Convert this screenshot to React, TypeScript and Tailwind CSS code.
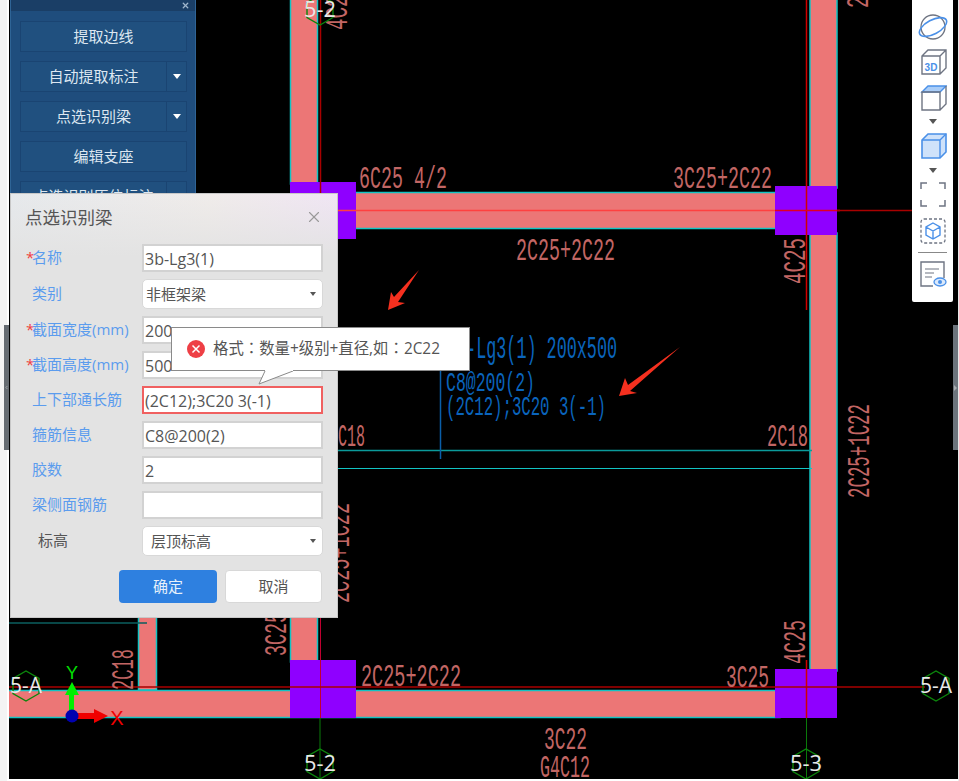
import { ChevronLeft, X } from 'lucide-react'

const CJK = "font-['Open_Sans','Noto_Sans_CJK_SC',sans-serif]"

function Cad({ x, y, w, h = 31, rot, fill = '#c26664', children }: { x: number; y: number; w: number; h?: number; rot?: boolean; fill?: string; children: string }) {
  return (
    <text
      x={x}
      y={y}
      fontSize={h}
      fill={fill}
      fontFamily="'Liberation Mono', monospace"
      textLength={w}
      lengthAdjust="spacingAndGlyphs"
      transform={rot ? `rotate(-90 ${x} ${y})` : undefined}
    >
      {children}
    </text>
  )
}

function AxisTag({ cx, cy, label }: { cx: number; cy: number; label: string }) {
  const r = 15
  const pts = [0, 60, 120, 180, 240, 300]
    .map((a) => {
      const t = ((a + 30) * Math.PI) / 180
      return `${cx + r * Math.cos(t)},${cy + r * Math.sin(t)}`
    })
    .join(' ')
  return (
    <g>
      <polygon points={pts} fill="none" stroke="#0c860c" strokeWidth="1.4" />
      <text x={cx - 16} y={cy + 7} fontSize="21" textLength={32} lengthAdjust="spacingAndGlyphs" fill="#e8e8e8" fontFamily="'Open Sans', sans-serif">
        {label}
      </text>
    </g>
  )
}

function CadCanvas() {
  const beam = '#ec7676'
  const cyan = '#12c4c4'
  const purple = '#8f00ff'
  const red = '#a80000'
  return (
    <svg width="950" height="781" viewBox="9 0 950 781" className="block">
      {/* beams */}
      <rect x="290.5" y="-2" width="27" height="186" fill={beam} stroke={cyan} strokeWidth="1.5" />
      <rect x="290.5" y="610" width="27" height="52" fill={beam} stroke={cyan} strokeWidth="1.5" />
      <rect x="810" y="-2" width="27" height="190" fill={beam} stroke={cyan} strokeWidth="1.5" />
      <rect x="810" y="233" width="27" height="438" fill={beam} stroke={cyan} strokeWidth="1.5" />
      <rect x="138.5" y="610" width="18" height="80" fill={beam} stroke={cyan} strokeWidth="1.5" />
      <rect x="340" y="192.5" width="440" height="36" fill={beam} stroke={cyan} strokeWidth="1.5" />
      <rect x="0" y="690.5" width="780" height="27" fill={beam} stroke={cyan} strokeWidth="1.5" />

      {/* thin lines */}
      <line x1="337" x2="812" y1="450.5" y2="450.5" stroke="#0b9a9a" strokeWidth="1.5" />
      <line x1="337" x2="812" y1="468.5" y2="468.5" stroke="#12c4c4" strokeWidth="1" />
      <line x1="9" x2="147" y1="623" y2="623" stroke="#0b5f5f" strokeWidth="1.5" />
      <line x1="440.5" x2="440.5" y1="360" y2="459" stroke="#0a5ea8" strokeWidth="1.5" />
      <line x1="320" x2="320" y1="660" y2="781" stroke="#0a7a0a" strokeWidth="1" />
      <line x1="806.5" x2="806.5" y1="718" y2="781" stroke="#0a7a0a" strokeWidth="1" />

      {/* columns */}
      <rect x="290" y="182" width="66" height="57" fill={purple} />
      <rect x="775" y="186" width="62" height="49" fill={purple} />
      <rect x="290" y="660" width="66" height="58" fill={purple} />
      <rect x="775" y="669" width="62" height="49" fill={purple} />

      {/* axis lines */}
      <line x1="320.5" x2="320.5" y1="0" y2="195" stroke={red} strokeWidth="1.5" />
      <line x1="806.5" x2="806.5" y1="0" y2="310" stroke="#d00000" strokeWidth="1.5" />
      <line x1="806.5" x2="806.5" y1="660" y2="718" stroke="#d00000" strokeWidth="1.5" />
      <line x1="320.5" x2="320.5" y1="617" y2="718" stroke="#c00030" strokeWidth="1" />
      <line x1="330" x2="775" y1="210.5" y2="210.5" stroke="#ff4040" strokeWidth="1.5" />
      <line x1="775" x2="840" y1="210.5" y2="210.5" stroke="#e00020" strokeWidth="1.5" />
      <line x1="837" x2="912" y1="210.5" y2="210.5" stroke={red} strokeWidth="1.5" />
      <line x1="9" x2="925" y1="687" y2="687" stroke={red} strokeWidth="1.5" />

      {/* rebar text */}
      <Cad x={359} y={188} w={88}>6C25 4/2</Cad>
      <Cad x={673} y={188} w={99}>3C25+2C22</Cad>
      <Cad x={516} y={260} w={99}>2C25+2C22</Cad>
      <Cad x={805} y={284} w={46} rot>4C25</Cad>
      <Cad x={767} y={446} w={41}>2C18</Cad>
      <Cad x={338} y={446} w={27}>C18</Cad>
      <Cad x={869} y={498} w={94} rot>2C25+1C22</Cad>
      <Cad x={361} y={686} w={100}>2C25+2C22</Cad>
      <Cad x={726} y={687} w={43}>3C25</Cad>
      <Cad x={805} y={664} w={44} rot>4C25</Cad>
      <Cad x={544} y={749} w={43}>3C22</Cad>
      <Cad x={540} y={777} w={50}>G4C12</Cad>
      <Cad x={286} y={656} w={44} rot>3C25</Cad>
      <Cad x={133} y={690} w={41} rot>2C18</Cad>
      <Cad x={349} y={603} w={100} rot>2C25+1C22</Cad>
      <Cad x={347} y={30} w={46} rot>4C25</Cad>
      <Cad x={868} y={8} w={46} rot>2C25</Cad>

      {/* selected beam label */}
      <Cad x={446} y={358} w={171} fill="#0a64bc">3b-Lg3(1) 200x500</Cad>
      <Cad x={446} y={391} w={89} h={28} fill="#0a64bc">C8@200(2)</Cad>
      <Cad x={446} y={415} w={160} h={28} fill="#0a64bc">(2C12);3C20 3(-1)</Cad>

      {/* axis tags */}
      <AxisTag cx={320} cy={10} label="5-2" />
      <AxisTag cx={26} cy={686} label="5-A" />
      <AxisTag cx={936} cy={686} label="5-A" />
      <AxisTag cx={320} cy={764} label="5-2" />
      <AxisTag cx={806} cy={764} label="5-3" />

      {/* ucs */}
      <rect x="69" y="694" width="5" height="22" fill="#00f000" />
      <polygon points="72,682 79,695 65,695" fill="#00f000" />
      <rect x="72" y="713" width="23" height="6" fill="#f00000" />
      <polygon points="108,716 94,709 94,723" fill="#f00000" />
      <circle cx="72" cy="716" r="6.5" fill="#0000b0" />
      <text x="72" y="679" fontSize="18" textAnchor="middle" fill="#00e000" fontFamily="'Liberation Sans', sans-serif">Y</text>
      <text x="117" y="725" fontSize="20" textAnchor="middle" fill="#f00000" fontFamily="'Liberation Sans', sans-serif">X</text>

      {/* red arrows */}
      <polygon points="388,310 391,292 394,297 419,270 398,302 405,303" fill="#f5301f" />
      <polygon points="619,396 625,378 628,385 680,347 630,391 637,393" fill="#f5301f" />
    </svg>
  )
}

function PanelButton({ label, split }: { label: string; split?: boolean }) {
  return (
    <div className="flex h-[31px] shrink-0 text-[15px] leading-[29px] text-[#dde7f1]">
      <div className="flex-1 border border-[#1a4472] bg-[#20507f] text-center">{label}</div>
      {split && (
        <div className="flex w-[20px] items-center justify-center border border-l-0 border-[#1a4472] bg-[#20507f]">
          <span className="h-0 w-0 border-x-[4px] border-t-[5px] border-x-transparent border-t-white" />
        </div>
      )}
    </div>
  )
}

function SidePanel() {
  return (
    <div className={`absolute left-[10px] top-0 flex h-[200px] w-[186px] flex-col border-x border-[#2f6496] bg-[#1f4d7d] ${CJK}`}>
      <div className="flex h-[11px] shrink-0 items-center justify-end bg-[#1a3e66] pr-[5px]">
        <X size={9} strokeWidth={3.5} className="text-[#9fb6cd]" />
      </div>
      <div className="flex flex-col gap-[9px] overflow-hidden pl-[9px] pr-[8px] pt-[10px]">
        <PanelButton label="提取边线" />
        <PanelButton label="自动提取标注" split />
        <PanelButton label="点选识别梁" split />
        <PanelButton label="编辑支座" />
        <PanelButton label="点选识别原位标注" split />
      </div>
    </div>
  )
}

function Field({ label, star, tone, value, select, selectPad, error }: { label: string; star?: boolean; tone?: string; value: string; select?: boolean; selectPad?: string; error?: boolean }) {
  return (
    <div className="flex items-center">
      <div className={`-mt-[2px] w-[116px] shrink-0 whitespace-nowrap text-[15px] ${tone ?? (star ? 'text-[#5b9cee]' : 'pl-[6px] text-[#5b9cee]')}`}>
        {star && <span className="inline-block w-[6px] text-[#f04040]">*</span>}
        {label}
      </div>
      {select ? (
        <div className={`flex h-[30px] w-[181px] items-center justify-between rounded-[5px] border border-[#d8d8d8] bg-white pr-[6px] text-[15px] text-[#555] ${selectPad}`}>
          {value}
          <span className="h-0 w-0 border-x-[3px] border-t-[4px] border-x-transparent border-t-[#555]" />
        </div>
      ) : (
        <div className={`h-[28px] w-[181px] border-2 bg-white pl-[1px] text-[16px] leading-[26px] text-[#555] ${error ? 'border-[#f06060]' : 'border-[#d2d2d2]'}`}>
          {value}
        </div>
      )}
    </div>
  )
}

function Dialog() {
  return (
    <div className={`absolute left-[10px] top-[193px] w-[328px] border border-[#c8c8c8] bg-[linear-gradient(180deg,#e3e3e300_0px,#e3e3e3_62px),linear-gradient(95deg,#e6e9ec_0%,#f0ecea_55%,#f0e3f7_100%)] pb-[14px] ${CJK}`}>
      <div className="flex h-[50px] items-center justify-between pl-[14px] pr-[14px] pb-[4px] text-[17.5px] text-[#555]">
        点选识别梁
        <X size={18} strokeWidth={1.5} className="text-[#999]" />
      </div>
      <div className="flex flex-col gap-[7px] pl-[15px]">
        <Field label="名称" star value="3b-Lg3(1)" />
        <Field label="类别" value="非框架梁" select selectPad="pl-[3px]" />
        <Field label="截面宽度(mm)" star value="200" />
        <Field label="截面高度(mm)" star value="500" />
        <Field label="上下部通长筋" value="(2C12);3C20 3(-1)" error />
        <Field label="箍筋信息" value="C8@200(2)" />
        <Field label="胶数" value="2" />
        <Field label="梁侧面钢筋" value="" />
        <Field label="标高" tone="pl-[12px] text-[#555]" value="层顶标高" select selectPad="pl-[8px]" />
      </div>
      <div className="mt-[14px] flex gap-[8px] pl-[108px] text-[15px] leading-[33px]">
        <div className="h-[33px] w-[98px] rounded-[4px] bg-[#2e80e0] text-center text-[#e6f0fb]">确定</div>
        <div className="h-[33px] w-[97px] rounded-[4px] border border-[#d8d8d8] bg-white text-center leading-[31px] text-[#555]">取消</div>
      </div>
    </div>
  )
}

function ErrorTip() {
  return (
    <div className="absolute left-[171px] top-[327px] flex h-[44px] w-[299px] items-center gap-[8px] border border-[#8a8a8a] bg-white pl-[15px] font-['Open_Sans','Noto_Sans_CJK_TC',sans-serif] text-[15.4px] text-[#555]">
      <svg width="18" height="18" viewBox="0 0 18 18" className="shrink-0">
        <circle cx="9" cy="9" r="9" fill="#ee3f45" />
        <path d="M5.5 5.5l7 7M12.5 5.5l-7 7" stroke="#fff" strokeWidth="1.5" />
      </svg>
      格式：数量+级别+直径,如：2C22
      <svg width="40" height="15" viewBox="0 0 40 15" className="absolute left-[85px] top-[42px]">
        <path d="M8 1L2 14L36 1" fill="#fff" stroke="#8a8a8a" strokeWidth="1" />
        <rect x="8" y="0" width="28" height="1" fill="#fff" />
      </svg>
    </div>
  )
}

function Toolbar() {
  const g = '#6e7482'
  const b = '#4a90e8'
  return (
    <div className="absolute right-[6px] top-0 flex h-[302px] w-[41px] flex-col items-center rounded-b-[2px] bg-white pt-[12px] shadow-[0_0_2px_rgba(0,0,0,0.3)]">
      <svg width="30" height="30" viewBox="0 0 30 30">
        <circle cx="15" cy="15" r="12" fill="none" stroke={g} strokeWidth="1.3" />
        <ellipse cx="15" cy="15" rx="15" ry="7" fill="none" stroke={b} strokeWidth="1.6" transform="rotate(-28 15 15)" />
      </svg>
      <svg width="28" height="27" viewBox="0 0 28 27" className="mt-[6px]">
        <path d="M3 8l6-6h18v18l-6 6H3zM3 8h18v18M21 8l6-6" fill="none" stroke={g} strokeWidth="1.4" />
        <text x="12" y="23" fontSize="10" fontWeight="700" textAnchor="middle" fill={b} fontFamily="'Liberation Sans', sans-serif">3D</text>
      </svg>
      <svg width="28" height="27" viewBox="0 0 28 27" className="mt-[9px]">
        <path d="M3 8l6-6h18l-6 6z" fill="#a9cdf8" stroke={b} strokeWidth="1.4" />
        <path d="M3 8h18v18H3zM21 26l6-6V2" fill="none" stroke={g} strokeWidth="1.4" />
      </svg>
      <span className="mt-[8px] h-0 w-0 border-x-[4px] border-t-[5px] border-x-transparent border-t-[#555]" />
      <svg width="28" height="27" viewBox="0 0 28 27" className="mt-[8px]">
        <path d="M3 8l6-6h18v18l-6 6H3z" fill="#cfe2fa" stroke={b} strokeWidth="1.6" />
        <path d="M3 8h18v18M21 8l6-6" fill="none" stroke={b} strokeWidth="1.4" />
      </svg>
      <span className="mt-[9px] h-0 w-0 border-x-[4px] border-t-[5px] border-x-transparent border-t-[#555]" />
      <svg width="26" height="27" viewBox="0 0 26 27" className="mt-[8px]">
        <path d="M1 8V2h6M19 2h6v6M25 19v6h-6M7 25H1v-6" fill="none" stroke={g} strokeWidth="1.5" />
      </svg>
      <svg width="26" height="26" viewBox="0 0 26 26" className="mt-[10px]">
        <rect x="1" y="1" width="24" height="24" rx="3" fill="none" stroke={g} strokeWidth="1.3" strokeDasharray="3 2" />
        <path d="M13 5l7 4v8l-7 4-7-4V9zM6 9l7 4 7-4M13 13v8" fill="none" stroke={b} strokeWidth="1.4" />
      </svg>
      <div className="mt-[8px] h-px w-[29px] shrink-0 bg-[#888]" />
      <svg width="28" height="27" viewBox="0 0 28 27" className="mt-[8px]">
        <path d="M14 25H2V1h23v16" fill="none" stroke={g} strokeWidth="1.4" />
        <path d="M6 8h14M6 12h9M6 16h7" fill="none" stroke={g} strokeWidth="1.2" />
        <ellipse cx="21" cy="21" rx="6" ry="4" fill="#dbe9fb" stroke={b} strokeWidth="1.3" />
        <circle cx="21" cy="21" r="2" fill={b} />
      </svg>
    </div>
  )
}

export default function App() {
  return (
    <div className="relative flex h-[781px] w-[959px] overflow-hidden bg-white">
      {/* left dock strip */}
      <div className="flex w-[9px] shrink-0 flex-col bg-[#f4f4f4]">
        <div className="h-[325px] border-r-2 border-[#fff]" />
        <div className="ml-[4px] flex h-[125px] items-center justify-center bg-[#666c72]">
          <ChevronLeft size={7} strokeWidth={4} className="text-[#a8acb0]" />
        </div>
        <div className="flex-1 border-r-2 border-[#fff]" />
      </div>

      <div className="relative h-[779px] flex-1 overflow-hidden bg-black">
        <CadCanvas />
      </div>

      {/* right dock handle */}
      <div className="absolute right-0 top-0 flex h-[779px] w-[6px] flex-col bg-black">
        <div className="h-[325px]" />
        <div className="flex h-[125px] w-[5px] items-center justify-center bg-[#6c747c]">
          <span className="h-0 w-0 border-y-[3px] border-l-[3px] border-y-transparent border-l-[#a8acb0]" />
        </div>
      </div>
      <div className="absolute right-0 top-0 h-[781px] w-px bg-[#e8e8e8]" />

      <SidePanel />
      <Toolbar />
      <Dialog />
      <ErrorTip />
    </div>
  )
}
